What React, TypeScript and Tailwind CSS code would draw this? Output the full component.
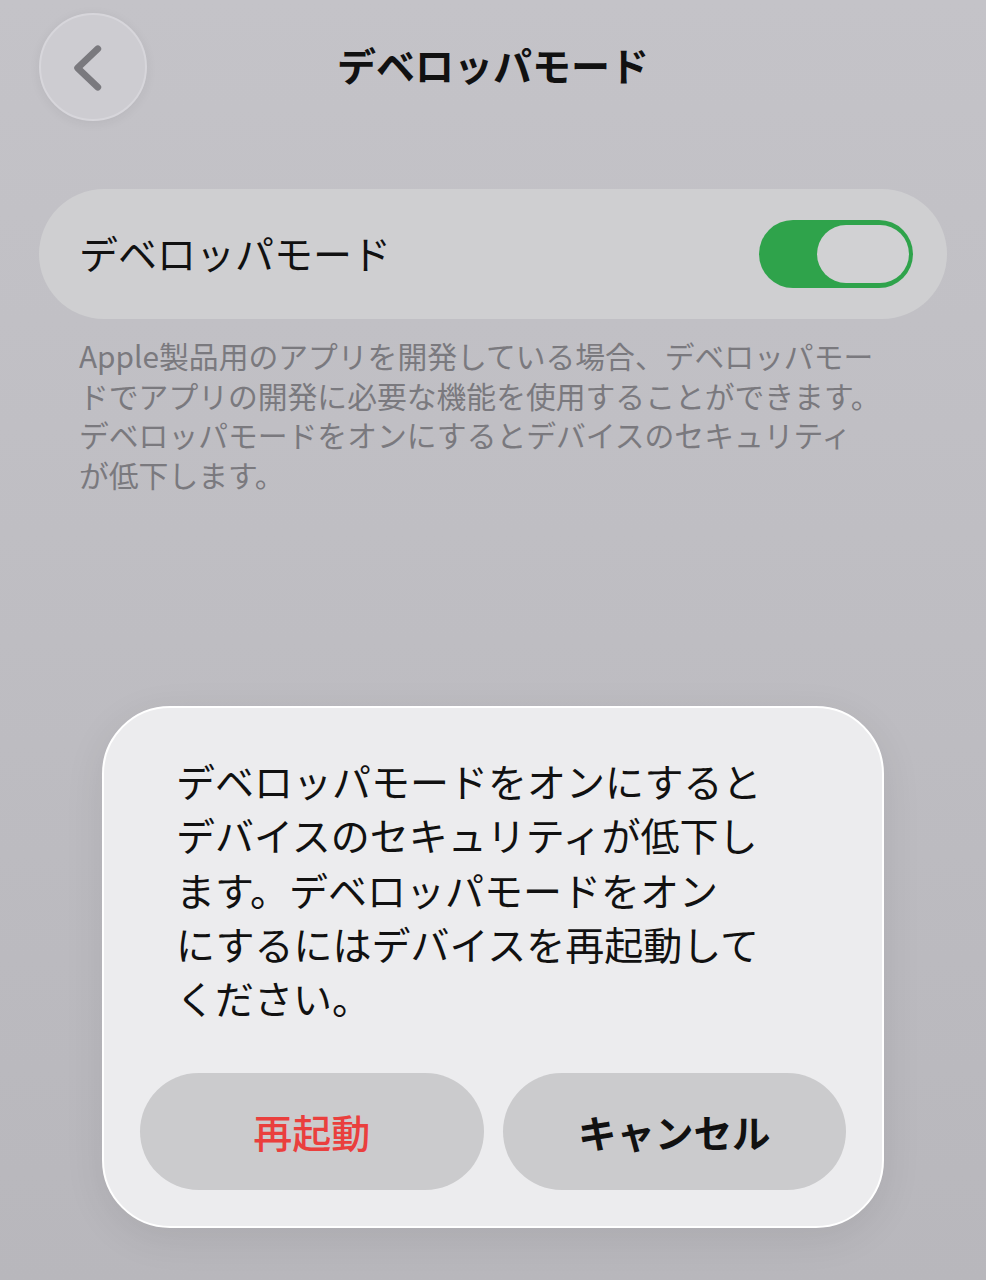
const font = "font-['Noto_Sans_CJK_JP','Noto_Sans',sans-serif]"

function BackChevron() {
  return (
    <svg width="108" height="108" viewBox="0 0 108 108" fill="none">
      <polyline
        points="59,35 38,55 59,75"
        stroke="#7a797e"
        strokeWidth="7"
        strokeLinecap="round"
        strokeLinejoin="round"
      />
    </svg>
  )
}

function Toggle() {
  return (
    <div className="w-[154px] h-[68px] rounded-full bg-[#2fa34b] flex items-center justify-end pr-[4px]">
      <div className="w-[92px] h-[58px] rounded-full bg-[#d1d1d3]" />
    </div>
  )
}

export default function App() {
  return (
    <div className={`${font} relative w-[986px] h-[1280px] overflow-hidden bg-gradient-to-b from-[#c4c3c8] to-[#b8b7bc]`}>
      {/* header */}
      <div className="grid grid-cols-[108px_1fr_108px] items-center px-[39px] pt-[13px]">
        <button className="w-[108px] h-[108px] rounded-full bg-[#cdccd1] border-2 border-[#d7d6db] shadow-[0_2px_12px_rgba(0,0,0,0.06)] flex items-center justify-center overflow-hidden">
          <BackChevron />
        </button>
        <h1 className="text-center text-[39px] font-bold text-[#111] -mt-[6px]">デベロッパモード</h1>
        <div />
      </div>

      {/* setting row */}
      <div className="mx-[39px] mt-[68px] h-[130px] rounded-full bg-[#cfcfd1] flex items-center justify-between pl-[40px] pr-[34px]">
        <span className="text-[39px] text-[#111] -mt-[4px]">デベロッパモード</span>
        <Toggle />
      </div>

      <p className="px-[79px] mt-[17px] text-[29.8px] leading-[39.5px] text-[#7a797e] whitespace-nowrap">
        Apple製品用のアプリを開発している場合、デベロッパモー
        <br />
        ドでアプリの開発に必要な機能を使用することができます。
        <br />
        デベロッパモードをオンにするとデバイスのセキュリティ
        <br />
        が低下します。
      </p>

      {/* restart alert */}
      <div className="absolute left-[102px] top-[706px] w-[782px] h-[522px] rounded-[68px] bg-[#ececee] border-2 border-white shadow-[0_10px_40px_rgba(0,0,0,0.08)] flex flex-col px-[36px] pb-[36px]">
        <p className="mt-[45px] pl-[36px] text-[39px] leading-[54.3px] text-[#111] whitespace-nowrap">
          デベロッパモードをオンにすると
          <br />
          デバイスのセキュリティが低下し
          <br />
          ます。デベロッパモードをオン
          <br />
          にするにはデバイスを再起動して
          <br />
          ください。
        </p>
        <div className="mt-auto grid grid-cols-2 gap-[19px]">
          <button className="h-[117px] rounded-full bg-[#cbcbcd] text-[39px] font-medium text-[#ea3f3d]">再起動</button>
          <button className="h-[117px] rounded-full bg-[#cbcbcd] text-[38.5px] font-semibold text-[#111]">キャンセル</button>
        </div>
      </div>
    </div>
  )
}
